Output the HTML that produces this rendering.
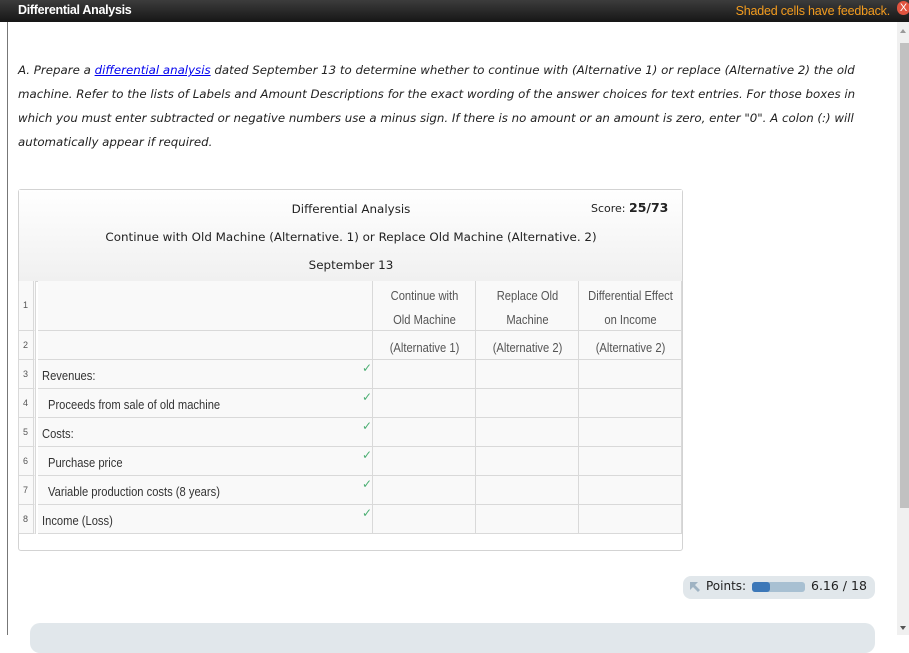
<!DOCTYPE html>
<html><head><meta charset="utf-8"><style>
*{margin:0;padding:0;box-sizing:border-box}
body{width:909px;height:635px;overflow:hidden;background:#fff;position:relative;font-family:"Liberation Sans",sans-serif}
.hdr{position:absolute;left:0;top:0;width:909px;height:22px;background:linear-gradient(#3c3c3c,#161616);}
.hdr .t{position:absolute;left:18px;top:3px;color:#fff;font-size:12.5px;letter-spacing:-0.3px;font-weight:bold}
.hdr .f{position:absolute;right:19px;top:4px;color:#f39c1f;font-size:12.5px;letter-spacing:-0.2px}
.x{position:absolute;left:897px;top:1px;width:13px;height:14px;border-radius:7px;background:#e0533f;color:#fff;font-size:11px;text-align:center;line-height:14px}
.lb{position:absolute;left:7px;top:22px;width:1px;height:613px;background:#777}
.sb{position:absolute;left:897px;top:22px;width:12px;height:613px;background:#f0f0f0}
.thumb{position:absolute;left:900px;top:43px;width:9px;height:465px;background:#c1c1c1}
.p{position:absolute;left:18px;top:58px;width:870px;font-family:"DejaVu Sans",sans-serif;font-style:italic;font-size:11.8px;line-height:24px;color:#222}
.p a{color:#00e;text-decoration:underline}
.box{position:absolute;left:18px;top:189px;width:665px;height:362px;border:1px solid #d3d3d3;border-radius:3px;background:#fff}
.th{position:absolute;left:0;top:0;width:663px;height:92px;background:linear-gradient(#fff,#f0f0f0);border-bottom:1px solid #d6d6d6;font-family:"DejaVu Sans",sans-serif;font-size:11.9px;color:#222}
.c{position:absolute;left:0;width:664px;text-align:center}
.g{position:absolute;font-family:"Liberation Sans",sans-serif;font-size:13px;color:#333;transform:scaleX(0.86);transform-origin:left;white-space:nowrap}
.gc{transform-origin:center;text-align:center}
.cell{position:absolute;border-right:1px solid #d9d9d9;border-bottom:1px solid #d9d9d9;background:#f9f9f9}
.num{font-size:9px;color:#555}
.ck{position:absolute;color:#4caf73;font-size:12px}
</style></head><body>
<div class="hdr"><div class="t">Differential Analysis</div><div class="f">Shaded cells have feedback.</div></div>
<div class="x">X</div>
<div class="lb"></div>
<div class="sb"></div><div class="thumb"></div>
<div style="position:absolute;left:900px;top:29px;width:0;height:0;border-left:3px solid transparent;border-right:3px solid transparent;border-bottom:4px solid #999"></div>
<div style="position:absolute;left:900px;top:626px;width:0;height:0;border-left:3px solid transparent;border-right:3px solid transparent;border-top:4px solid #555"></div>
<div class="p">A. Prepare a <a>differential analysis</a> dated September 13 to determine whether to continue with (Alternative 1) or replace (Alternative 2) the old machine. Refer to the lists of Labels and Amount Descriptions for the exact wording of the answer choices for text entries. For those boxes in which you must enter subtracted or negative numbers use a minus sign. If there is no amount or an amount is zero, enter "0". A colon (:) will automatically appear if required.</div>
<div class="box">
<div class="th">
<div class="c" style="top:12px">Differential Analysis</div>
<div style="position:absolute;left:572px;top:10px;font-size:11px">Score: <b style="font-size:12.5px">25/73</b></div>
<div class="c" style="top:40px">Continue with Old Machine (Alternative. 1) or Replace Old Machine (Alternative. 2)</div>
<div class="c" style="top:68px">September 13</div>
</div>
</div>
<div id="grid"></div>
<script>
var g=document.getElementById('grid'),h='';
var rows=[[281,50],[331,29],[360,29],[389,29],[418,29],[447,29],[476,29],[505,29]];
var cols=[[18,18],[38,335],[373,103],[476,103],[579,103]];
var labels=['','','Revenues:','  Proceeds from sale of old machine','Costs:','  Purchase price','  Variable production costs (8 years)','Income (Loss)'];
rows.forEach(function(r,i){
 cols.forEach(function(c,j){
  h+='<div class="cell" style="left:'+c[0]+'px;top:'+r[0]+'px;width:'+c[1]+'px;height:'+r[1]+'px;'+(j==0?'border-right:3px double #d9d9d9;border-left:1px solid #d9d9d9;':'')+'"></div>';
 });
 h+='<div class="num" style="position:absolute;left:23px;top:'+(r[0]+r[1]/2-6)+'px">'+(i+1)+'</div>';
 if(i>=2){var ind=labels[i].indexOf('  ')==0;
  h+='<div class="g" style="left:'+(ind?48:42)+'px;top:'+(r[0]+8)+'px">'+labels[i].trim()+'</div>';
  h+='<div class="ck" style="left:362px;top:'+(r[0]+1)+'px">✓</div>';}
});
var hd=[['Continue with','Old Machine','(Alternative 1)'],['Replace Old','Machine','(Alternative 2)'],['Differential Effect','on Income','(Alternative 2)']];
hd.forEach(function(t,k){var x=cols[k+2][0];
 h+='<div class="g gc" style="left:'+x+'px;width:103px;top:288px;color:#555">'+t[0]+'</div>';
 h+='<div class="g gc" style="left:'+x+'px;width:103px;top:312px;color:#555">'+t[1]+'</div>';
 h+='<div class="g gc" style="left:'+x+'px;width:103px;top:340px;color:#555">'+t[2]+'</div>';
});
g.innerHTML=h;
</script>
<div style="position:absolute;left:683px;top:576px;width:192px;height:23px;border-radius:8px;background:#e1e7eb"></div>
<svg style="position:absolute;left:689px;top:581px" width="11" height="12"><path d="M1 1h8L6 4l5 5-2 2-5-5-3 3z" fill="#9fb3c3"/></svg>
<div style="position:absolute;left:706px;top:579px;font-family:'DejaVu Sans',sans-serif;font-size:12px;color:#222">Points:</div>
<div style="position:absolute;left:752px;top:582px;width:53px;height:10px;border-radius:3px;background:#a8c0d2"></div>
<div style="position:absolute;left:752px;top:582px;width:18px;height:10px;border-radius:3px;background:#3d78b8"></div>
<div style="position:absolute;left:811px;top:578px;font-family:'DejaVu Sans',sans-serif;font-size:12.5px;color:#222">6.16 / 18</div>
<div style="position:absolute;left:30px;top:623px;width:845px;height:30px;border-radius:10px;background:#e1e7eb"></div>
</body></html>
